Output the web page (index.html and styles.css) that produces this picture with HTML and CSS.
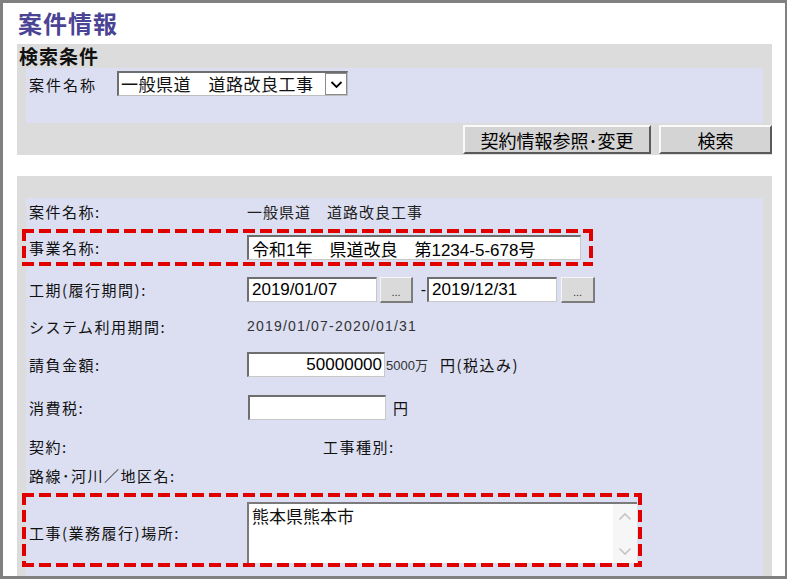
FILE: index.html
```html
<!DOCTYPE html>
<html lang="ja">
<head>
    <meta charset="UTF-8">
    <title>案件情報</title>
    <link rel="stylesheet" href="styles.css">
</head>
<body>
    <div class="frame">
        <h1 class="page-title">案件情報</h1>

        <!-- 検索条件 -->
        <section class="panel search">
            <h2>検索条件</h2>
            <div class="inner search-inner">
                <span class="search-label">案件名称</span>
                <div class="select">
                    <span class="select-text">一般県道　道路改良工事</span>
                    <span class="select-btn">
                        <svg width="13" height="9" viewBox="0 0 13 9"><path d="M1.5 2 L6.5 7 L11.5 2" fill="none" stroke="#000" stroke-width="1.8"/></svg>
                    </span>
                </div>
            </div>
            <div class="actions">
                <button class="btn btn-wide">契約情報参照･変更</button>
                <button class="btn btn-search">検索</button>
            </div>
        </section>

        <!-- 案件詳細 -->
        <section class="panel detail-panel">
            <div class="inner detail">
                <div class="row">
                    <span class="label">案件名称:</span>
                    <span class="value">一般県道　道路改良工事</span>
                </div>
                <div class="row mark mark-name">
                    <span class="label">事業名称:</span>
                    <input class="field field-long" type="text" value="令和1年　県道改良　第1234-5-678号">
                </div>
                <div class="row">
                    <span class="label">工期(履行期間):</span>
                    <input class="field field-date" type="text" value="2019/01/07">
                    <button class="dot-btn">...</button>
                    <span class="dash">-</span>
                    <input class="field field-date" type="text" value="2019/12/31">
                    <button class="dot-btn dot-btn-2">...</button>
                </div>
                <div class="row">
                    <span class="label">システム利用期間:</span>
                    <span class="value value-small">2019/01/07-2020/01/31</span>
                </div>
                <div class="row">
                    <span class="label">請負金額:</span>
                    <input class="field field-money" type="text" value="50000000">
                    <span class="note">5000万</span>
                    <span class="unit">円(税込み)</span>
                </div>
                <div class="row">
                    <span class="label">消費税:</span>
                    <input class="field field-tax" type="text" value="">
                    <span class="unit unit-tax">円</span>
                </div>
                <div class="row">
                    <span class="label label-short">契約:</span>
                    <span class="label">工事種別:</span>
                </div>
                <div class="row">
                    <span class="label">路線･河川／地区名:</span>
                </div>
                <div class="row mark mark-place">
                    <span class="label">工事(業務履行)場所:</span>
                    <div class="textarea">
                        <span class="textarea-text">熊本県熊本市</span>
                        <div class="scrollbar">
                            <svg width="14" height="9" viewBox="0 0 14 9"><path d="M1.5 7.5 L7 2 L12.5 7.5" fill="none" stroke="#c4c4c4" stroke-width="1.6"/></svg>
                            <svg width="14" height="9" viewBox="0 0 14 9"><path d="M1.5 1.5 L7 7 L12.5 1.5" fill="none" stroke="#c4c4c4" stroke-width="1.6"/></svg>
                        </div>
                    </div>
                </div>
            </div>
        </section>
    </div>
</body>
</html>
```

FILE: styles.css
```css
body {
    margin: 0;
    font-family: "Noto Sans CJK JP", sans-serif;
    color: #111;
    background: #fff;
}
.frame {
    height: 579px;
    box-sizing: border-box;
    border: 3px solid #808080;
    border-right-width: 2px;
    padding: 0 13px 0 14px;
    overflow: hidden;
}
.page-title {
    margin: 0 0 6px;
    padding: 5px 0 0 1px;
    font-size: 24px;
    line-height: 30px;
    letter-spacing: 1px;
    font-weight: bold;
    color: #4b4394;
}
.panel {
    background: #dcdcdc;
}
.inner {
    background: #dcdff1;
    margin: 0 9px;
}

/* search */
.search h2 {
    margin: 0;
    padding-left: 2px;
    height: 24px;
    font-size: 19px;
    line-height: 24px;
    letter-spacing: 1px;
    font-weight: bold;
}
.search-inner {
    height: 55px;
    box-sizing: border-box;
    padding: 3px 0 0 3px;
    display: flex;
    align-items: flex-start;
}
.search-label {
    width: 88px;
    height: 25px;
    line-height: 27px;
    font-size: 15px;
    letter-spacing: 2px;
}
.select {
    display: flex;
    width: 231px;
    height: 25px;
    box-sizing: border-box;
    background: #fff;
    border-style: solid;
    border-width: 2px 1px 1px 2px;
    border-color: #6e6e6e #bdbdbd #bdbdbd #6e6e6e;
}
.select-text {
    flex: 1;
    padding-left: 2px;
    font-size: 17px;
    letter-spacing: 0.5px;
    line-height: 22px;
    white-space: nowrap;
}
.select-btn {
    width: 20px;
    display: flex;
    align-items: center;
    justify-content: center;
    border: 1px solid #8a8a8a;
    background: #fff;
}
.actions {
    display: flex;
    justify-content: flex-end;
    gap: 8px;
    padding: 2px 0 1px;
}
.btn {
    height: 29px;
    box-sizing: border-box;
    background: #d4d4d4;
    border-style: solid;
    border-width: 2px;
    border-color: #fafafa #5a5a5a #5a5a5a #fafafa;
    font-family: "Noto Sans CJK JP", sans-serif;
    font-size: 18px;
    line-height: 22px;
    color: #000;
    padding: 0;
}
.btn-wide {
    width: 188px;
}
.btn-search {
    width: 113px;
}

/* detail */
.detail-panel {
    margin-top: 21px;
    padding-top: 22px;
}
.detail {
    display: grid;
    grid-template-rows: 27px 41px 47px 26px 51px 34px 44px 14px 85px;
    padding: 0 0 30px 3px;
}
.row {
    display: flex;
    align-items: center;
}
.label {
    width: 218px;
    flex-shrink: 0;
    font-size: 15px;
    letter-spacing: 1.5px;
    white-space: nowrap;
}
.label-short {
    width: 294px;
}
.value {
    font-size: 15px;
    letter-spacing: 1px;
    color: #222;
}
.value-small {
    font-family: "Liberation Sans", sans-serif;
    font-size: 14px;
    letter-spacing: 1.2px;
    color: #333;
}

/* red dashed marker round a row */
.mark {
    align-self: end;
    margin-left: -7px;
    padding: 4px 4px 4px 7px;
    box-sizing: border-box;
    background:
        repeating-linear-gradient(90deg, #e00000 0 12px, transparent 12px 17px) left top / 100% 4px no-repeat,
        repeating-linear-gradient(90deg, #e00000 0 12px, transparent 12px 17px) left bottom / 100% 4px no-repeat,
        repeating-linear-gradient(180deg, #e00000 0 12px, transparent 12px 17px) left top / 4px 100% no-repeat,
        repeating-linear-gradient(180deg, #e00000 0 12px, transparent 12px 17px) right top / 4px 100% no-repeat;
}
.mark-name {
    width: 571px;
    height: 37px;
}
.mark-place {
    width: 620px;
    height: 74px;
    align-items: flex-end;
}
.mark-place .label {
    align-self: center;
    padding-top: 4px;
}
.field {
    height: 25px;
    box-sizing: border-box;
    margin: 0;
    padding: 0 3px;
    background: #fff;
    border-style: solid;
    border-width: 2px 1px 1px 2px;
    border-color: #6e6e6e #c8c8c8 #c8c8c8 #6e6e6e;
    font-family: "Liberation Sans", "Noto Sans CJK JP", sans-serif;
    font-size: 17px;
    color: #000;
    outline: none;
}
.field-long {
    width: 334px;
}
.field-date {
    width: 130px;
}
.field-money {
    width: 138px;
    text-align: right;
    padding-right: 2px;
}
.field-tax {
    width: 138px;
    margin-left: 1px;
}
.dot-btn {
    width: 33px;
    height: 26px;
    margin-left: 3px;
    padding: 6px 0 0;
    box-sizing: border-box;
    background: #dadada;
    border-style: solid;
    border-width: 1px 2px 2px 1px;
    border-color: #f6f6f6 #7c7c7c #7c7c7c #f6f6f6;
    font-family: "Liberation Sans", sans-serif;
    font-size: 11px;
    color: #333;
}
.dot-btn-2 {
    margin-left: 4px;
    width: 34px;
}
.dash {
    width: 14px;
    text-align: right;
    font-family: "Liberation Sans", sans-serif;
    font-size: 16px;
    padding-right: 1px;
    box-sizing: border-box;
}
.note {
    font-family: "Liberation Sans", "Noto Sans CJK JP", sans-serif;
    font-size: 13px;
    color: #333;
    margin-left: 1px;
}
.unit {
    font-size: 15px;
    letter-spacing: 1.5px;
    margin-left: 12px;
}
.unit-tax {
    margin-left: 7px;
}
.textarea {
    display: flex;
    width: 390px;
    height: 61px;
    box-sizing: border-box;
    background: #fff;
    border-style: solid;
    border-width: 2px 0 0 2px;
    border-color: #7a7a7a;
}
.textarea-text {
    flex: 1;
    padding: 0 3px;
    font-size: 17px;
    line-height: 24px;
}
.scrollbar {
    width: 24px;
    background: #f6f6f6;
    display: flex;
    flex-direction: column;
    align-items: center;
    justify-content: space-between;
    padding: 8px 0 7px;
    box-sizing: border-box;
}
```
